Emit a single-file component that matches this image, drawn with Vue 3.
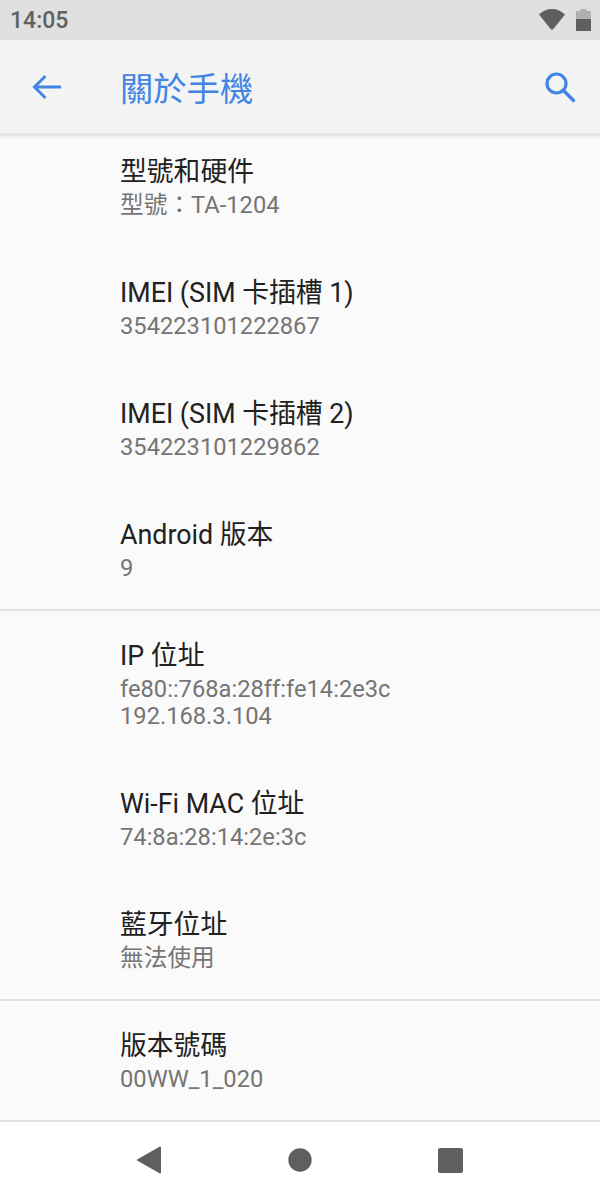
<script setup>
const groups = [
  [
    { title: "型號和硬件", lines: ["型號：TA-1204"], first: true },
    { title: "IMEI (SIM 卡插槽 1)", lines: ["354223101222867"] },
    { title: "IMEI (SIM 卡插槽 2)", lines: ["354223101229862"] },
    { title: "Android 版本", lines: ["9"] },
  ],
  [
    { title: "IP 位址", lines: ["fe80::768a:28ff:fe14:2e3c", "192.168.3.104"] },
    { title: "Wi-Fi MAC 位址", lines: ["74:8a:28:14:2e:3c"] },
    { title: "藍牙位址", lines: ["無法使用"] },
  ],
  [
    { title: "版本號碼", lines: ["00WW_1_020"] },
  ],
]
</script>

<template>
  <div class="phone">
    <div class="status">
      <span class="time">14:05</span>
      <div class="status_icons">
        <svg class="wifi" width="26" height="21" viewBox="0 0 26 21">
          <path d="M13 20.8 Q12.3 20.8 11.7 20 L0 5.5 C3.5 2 8 0 13 0 C18 0 22.5 2 26 5.5 L14.3 20 Q13.7 20.8 13 20.8 Z" fill="#5f5f5f" />
        </svg>
        <svg width="15" height="22" viewBox="0 0 15 22">
          <path d="M4.5 0 H10.5 V2 H15 V10 H0 V2 H4.5 Z" fill="#b0b0b0" />
          <rect x="0" y="10" width="15" height="12" fill="#5f5f5f" />
        </svg>
      </div>
    </div>

    <div class="toolbar">
      <svg class="back" width="30" height="26" viewBox="0 0 30 26">
        <path d="M29 13 H3 M13.5 2 L2.5 13 L13.5 24" fill="none" stroke="#4285e4" stroke-width="3" />
      </svg>
      <span class="toolbar_title">關於手機</span>
      <svg class="search" width="32" height="32" viewBox="0 0 32 32">
        <circle cx="12.5" cy="12.5" r="9.5" fill="none" stroke="#4285e4" stroke-width="3.2" />
        <path d="M19.5 19.5 L29.5 29.5" stroke="#4285e4" stroke-width="3.4" stroke-linecap="round" />
      </svg>
    </div>
    <div class="shadow"></div>

    <div class="list">
      <div class="group" v-for="(group, g) in groups" :key="g">
        <div class="row" :class="{ first: item.first }" v-for="item in group" :key="item.title">
          <div class="title">{{ item.title }}</div>
          <div class="sub" v-for="line in item.lines" :key="line">{{ line }}</div>
        </div>
      </div>
    </div>

    <div class="nav">
      <svg width="26" height="28" viewBox="0 0 26 28">
        <path d="M24 1.5 V26.5 L2 14 Z" fill="#5f5f5f" stroke="#5f5f5f" stroke-width="2" stroke-linejoin="round" />
      </svg>
      <svg width="24" height="24" viewBox="0 0 24 24">
        <circle cx="12" cy="12" r="11.7" fill="#5f5f5f" />
      </svg>
      <div class="square"></div>
    </div>
  </div>
</template>

<style>
html, body {
  margin: 0;
  background: #fafafa;
}
</style>

<style scoped>
.phone {
  width: 600px;
  height: 1200px;
  display: flex;
  flex-direction: column;
  overflow: hidden;
  background: #fafafa;
  font-family: Roboto, "Noto Sans CJK TC", sans-serif;
}
.status {
  height: 40px;
  flex: none;
  display: flex;
  align-items: center;
  justify-content: space-between;
  padding: 0 9px 0 10px;
  box-sizing: border-box;
  background: #e0e0e0;
}
.time {
  font-size: 23px;
  font-weight: 500;
  color: #616161;
}
.status_icons {
  display: flex;
  align-items: center;
  gap: 11px;
}
.wifi {
  margin-bottom: 1px;
}
.toolbar {
  height: 93px;
  flex: none;
  display: flex;
  align-items: center;
  background: #f4f4f4;
}
.shadow {
  height: 7px;
  flex: none;
  background: linear-gradient(#e6e6e6, #e6e6e6 40%, #f2f2f2 60%, #fafafa);
}
.back {
  margin-left: 32px;
}
.toolbar_title {
  margin-left: 58px;
  font-size: 33.3px;
  color: #4285e4;
}
.search {
  margin-left: auto;
  margin-right: 24px;
}
.list {
  flex: 1;
  overflow: hidden;
}
.group {
  border-bottom: 2px solid #e0e0e0;
}
.group:last-child {
  border-bottom: none;
}
.group + .group .row:first-child {
  padding-top: 25px;
}
.row {
  padding: 26px 0 28px 120px;
}
.row:last-child {
  padding-bottom: 27px;
}
.row.first {
  padding-top: 12px;
}
.title {
  font-size: 26.8px;
  line-height: 40px;
  color: #212121;
}
.sub {
  font-size: 23.7px;
  line-height: 27px;
  color: #757575;
}
.nav {
  height: 80px;
  flex: none;
  display: flex;
  align-items: center;
  justify-content: center;
  gap: 126px;
  padding: 0 1px 2px 0;
  background: #fff;
  border-top: 2px solid #e0e0e0;
  box-sizing: border-box;
}
.square {
  width: 25px;
  height: 25px;
  border-radius: 2px;
  background: #5f5f5f;
}
</style>
